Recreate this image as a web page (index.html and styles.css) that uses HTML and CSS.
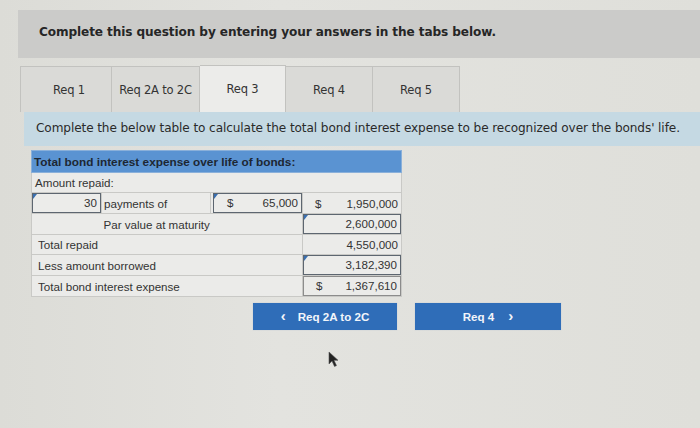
FILE: index.html
```html
<!DOCTYPE html>
<html>
<head>
<meta charset="utf-8">
<link rel="stylesheet" href="styles.css">
</head>
<body>
<div class="page">
  <div class="banner">Complete this question by entering your answers in the tabs below.</div>
  <div class="tabs">
    <div class="tab t1">Req 1</div>
    <div class="tab t2">Req 2A to 2C</div>
    <div class="tab t3 active">Req 3</div>
    <div class="tab t4">Req 4</div>
    <div class="tab t5">Req 5</div>
  </div>
  <div class="instr">Complete the below table to calculate the total bond interest expense to be recognized over the bonds' life.</div>
  <table class="calc">
    <colgroup><col class="wa"><col class="wb"><col class="wc"><col class="wd"></colgroup>
    <tr class="head"><th colspan="4">Total bond interest expense over life of bonds:</th></tr>
    <tr><td colspan="4" class="lbl">Amount repaid:</td></tr>
    <tr>
      <td class="ca"><div class="inp num">30</div></td>
      <td class="cb">payments of</td>
      <td class="cc"><div class="inp money"><span>$</span><span>65,000</span></div></td>
      <td class="cd"><div class="val money"><span>$</span><span>1,950,000</span></div></td>
    </tr>
    <tr>
      <td class="ca blank"></td>
      <td colspan="2" class="par">Par value at maturity</td>
      <td class="cd"><div class="inp num">2,600,000</div></td>
    </tr>
    <tr>
      <td colspan="3" class="lbl2">Total repaid</td>
      <td class="cd"><div class="val num">4,550,000</div></td>
    </tr>
    <tr>
      <td colspan="3" class="lbl2">Less amount borrowed</td>
      <td class="cd"><div class="inp num">3,182,390</div></td>
    </tr>
    <tr>
      <td colspan="3" class="lbl2">Total bond interest expense</td>
      <td class="cd"><div class="val tot money"><span>$</span><span>1,367,610</span></div></td>
    </tr>
  </table>
  <div class="nav">
    <div class="btn prev"><span class="chev">&lsaquo;</span>Req 2A to 2C</div>
    <div class="btn next">Req 4<span class="chev">&rsaquo;</span></div>
  </div>
</div>
<svg class="cursor" width="12" height="17" viewBox="0 0 12 17"><path d="M1 1 L1 13 L4 10 L6.5 15.5 L8.5 14.6 L6 9.3 L10 9.3 Z" fill="#222" stroke="#555" stroke-width="0.6"/></svg>
</body>
</html>
```

FILE: styles.css
```css
html, body { margin: 0; padding: 0; }
body {
  width: 700px; height: 428px; overflow: hidden;
  background: linear-gradient(90deg, #dcdcd7 0%, #e3e3df 40%, #dfdfda 100%);
  position: relative;
  font-family: "DejaVu Sans", Verdana, sans-serif;
  color: #2b2b2b;
}
.page { padding-top: 10px; }
.banner {
  margin-left: 18px; height: 48px; background: #cbcbc9;
  font-weight: bold; font-size: 12.1px; letter-spacing: -0.1px;
  padding-left: 21px; line-height: 44px; color: #262626;
}
.tabs { display: flex; margin-left: 20px; margin-top: 8px; height: 46px; }
.tab {
  box-sizing: border-box; height: 46px; background: #dadad7;
  border: 1px solid #c2c2bf; border-bottom: none;
  font-size: 11.5px; line-height: 46px; text-align: center; color: #333;
  letter-spacing: -0.2px;
}
.tab + .tab { border-left: none; }
.t1 { width: 92px; padding-left: 6px; }
.t2 { width: 88px; }
.t3 { width: 86px; }
.t4 { width: 87px; }
.t5 { width: 87px; }
.active { background: #ececea; height: 47px; margin-top: -1px; line-height: 47px; }
.instr {
  margin-left: 24px; height: 34px; background: #c5d9e3;
  font-size: 12.1px; line-height: 32px; padding-left: 12px; color: #2a2a2a;
  letter-spacing: -0.1px;
}
.calc {
  margin-left: 31px; margin-top: 4px; width: 370px;
  border-collapse: collapse; font-family: "Liberation Sans", Arial, sans-serif;
  font-size: 11.6px; color: #333; table-layout: fixed;
}
.wa { width: 70px; }
.wb { width: 109px; }
.wc { width: 92px; }
.wd { width: 99px; }
.calc td, .calc th {
  padding: 0; border: 1px solid #c9c9c6; height: 19px; background: #ebebe9;
  box-sizing: border-box;
}
.calc tr.head th {
  background: #5a93d2; color: #1d2733; text-align: left; font-weight: bold;
  font-size: 11.8px; height: 22px; padding-left: 2px; border: 1px solid #8ab0da;
}
.calc td.lbl { padding-left: 3px; height: 20px; }
.calc td.lbl2 { padding-left: 6px; height: 20px; }
.calc td.cb { padding-left: 2px; border-left: none; }
.calc td.cc { border-left: none; }
.calc td.blank { border-right: none; }
.calc td.par { padding-left: 2px; border-left: none; }
.inp {
  box-sizing: border-box; height: 20px; border: 1px solid #5d6670; background: #ececea;
  position: relative; line-height: 18px; padding: 0 3px;
}
.inp::before {
  content: ""; position: absolute; left: 0; top: 0;
  border-top: 5px solid #3a6fb0; border-right: 4px solid transparent;
}
.val { height: 19px; line-height: 19px; padding: 0 3px; }
.num { text-align: right; }
.money { display: flex; justify-content: space-between; }
.money span:first-child { padding-left: 9px; }
.cc .inp.money { margin-left: 2px; }
.cc .inp.money span:first-child { padding-left: 10px; }
.tot { border: 1px solid #8c8c8c; box-sizing: border-box; height: 20px; line-height: 18px; }
.nav { display: flex; gap: 18px; margin-left: 253px; margin-top: 6px; }
.btn {
  width: 144px; height: 27px; background: #2f6db8; color: #f2f5fa;
  font-family: "Liberation Sans", Arial, sans-serif; font-weight: bold; font-size: 11.6px;
  display: flex; align-items: center; justify-content: center; box-shadow: 0 0 1px #b0bfd0;
}
.btn.prev { width: 144px; }
.btn.next { width: 146px; }
.chev { font-size: 15px; font-weight: bold; line-height: 1; }
.prev .chev { margin-right: 12px; margin-top: -2px; }
.next .chev { margin-left: 14px; margin-top: -2px; }
.cursor { position: absolute; left: 328px; top: 351px; }
```
